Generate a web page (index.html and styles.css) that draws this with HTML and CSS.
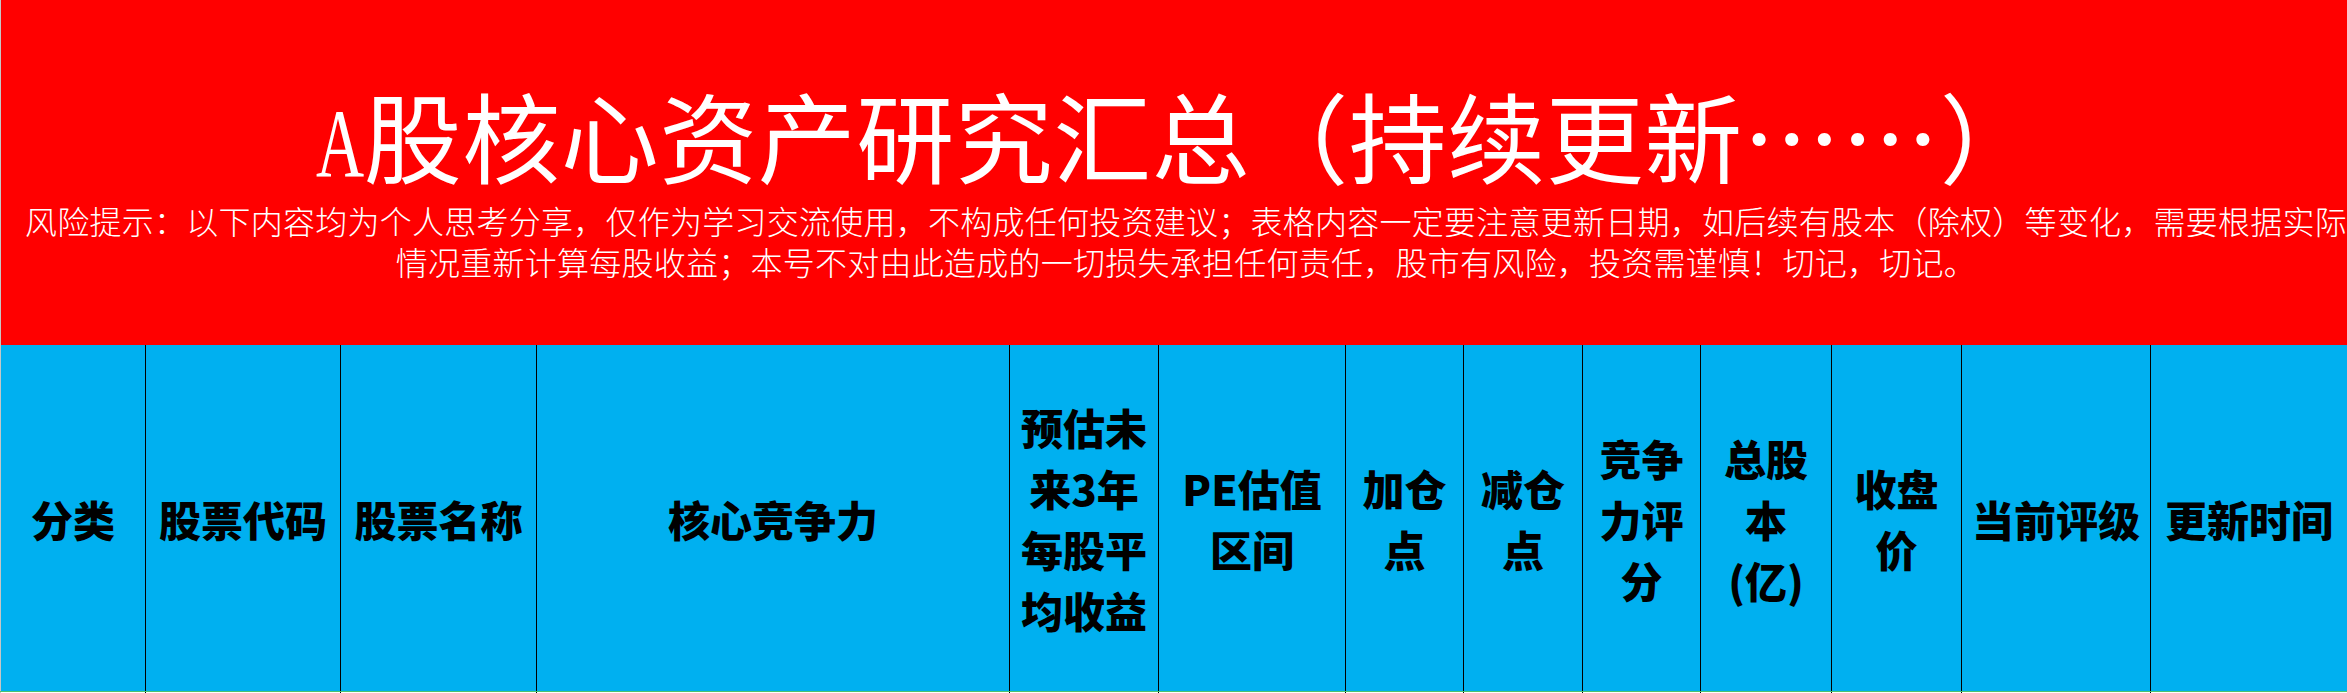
FILE: index.html
```html
<!DOCTYPE html>
<html lang="zh-CN">
<head>
<meta charset="utf-8">
<title>A股核心资产研究汇总</title>
<link rel="stylesheet" href="styles.css">
</head>
<body>
<div class="sheet">
  <section class="banner">
    <h1 class="title"><span class="latin">A</span>股核心资产研究汇总（持续更新……）</h1>
    <p class="notice">风险提示：以下内容均为个人思考分享，仅作为学习交流使用，不构成任何投资建议；表格内容一定要注意更新日期，如后续有股本（除权）等变化，需要根据实际<br>情况重新计算每股收益；本号不对由此造成的一切损失承担任何责任，股市有风险，投资需谨慎！切记，切记。</p>
  </section>
  <div class="head">
    <div class="cell first">分类</div>
    <div class="cell">股票代码</div>
    <div class="cell">股票名称</div>
    <div class="cell">核心竞争力</div>
    <div class="cell">预估未<br>来3年<br>每股平<br>均收益</div>
    <div class="cell">PE估值<br>区间</div>
    <div class="cell">加仓<br>点</div>
    <div class="cell">减仓<br>点</div>
    <div class="cell">竞争<br>力评<br>分</div>
    <div class="cell">总股<br>本<br>(亿)</div>
    <div class="cell">收盘<br>价</div>
    <div class="cell">当前评级</div>
    <div class="cell">更新时间</div>
  </div>
  <div class="row">
    <div class="rcell first"></div>
    <div class="rcell"></div>
    <div class="rcell"></div>
    <div class="rcell"></div>
    <div class="rcell"></div>
    <div class="rcell"></div>
    <div class="rcell"></div>
    <div class="rcell"></div>
    <div class="rcell"></div>
    <div class="rcell"></div>
    <div class="rcell"></div>
    <div class="rcell"></div>
    <div class="rcell"></div>
  </div>
</div>
</body>
</html>
```
FILE: styles.css
```css
* { box-sizing: border-box; }
html, body {
  margin: 0;
  padding: 0;
  background: #ffffff;
}
body {
  width: 2347px;
  height: 693px;
  overflow: hidden;
}
.sheet {
  width: 2347px;
  height: 693px;
  overflow: hidden;
}
.banner {
  height: 345px;
  background: #ff0000;
  border-left: 1px solid #c6c6c6;
  color: #ffffff;
  font-family: "Noto Sans CJK SC", sans-serif;
  font-weight: 300;
  text-align: center;
  padding-top: 89px;
}
.title {
  margin: 0;
  padding-left: 6px;
  font-size: 98px;
  line-height: 88px;
  letter-spacing: 0.5px;
  font-weight: 400;
  white-space: nowrap;
}
.latin {
  display: inline-block;
  width: 48px;
  font-family: "Liberation Serif", serif;
  font-weight: 400;
  transform: scaleX(0.68);
  transform-origin: left center;
  text-align: left;
}
.notice {
  margin: 13px 0 0;
  padding-left: 24px;
  font-size: 32px;
  line-height: 41px;
  letter-spacing: 0.25px;
  white-space: nowrap;
}
.head, .row {
  display: grid;
  grid-template-columns: 145px 195px 196px 473px 149px 187px 118px 119px 118px 131px 130px 189px 197px;
}
.head {
  height: 347px;
  background: #00b0f0;
  border-bottom: 1px solid #4cc36e;
}
.cell {
  border-left: 1px solid #000000;
  display: flex;
  align-items: center;
  justify-content: center;
  text-align: center;
  font-family: "Noto Sans CJK SC", sans-serif;
  font-weight: 900;
  font-size: 42px;
  line-height: 61px;
  color: #000000;
  white-space: nowrap;
}
.cell.first {
  border-left: 1px solid #c6c6c6;
}
.row {
  height: 1px;
  background: #ffffff;
}
.rcell {
  border-left: 1px solid #000000;
}
.rcell.first {
  border-left: 1px solid #c6c6c6;
}
```
